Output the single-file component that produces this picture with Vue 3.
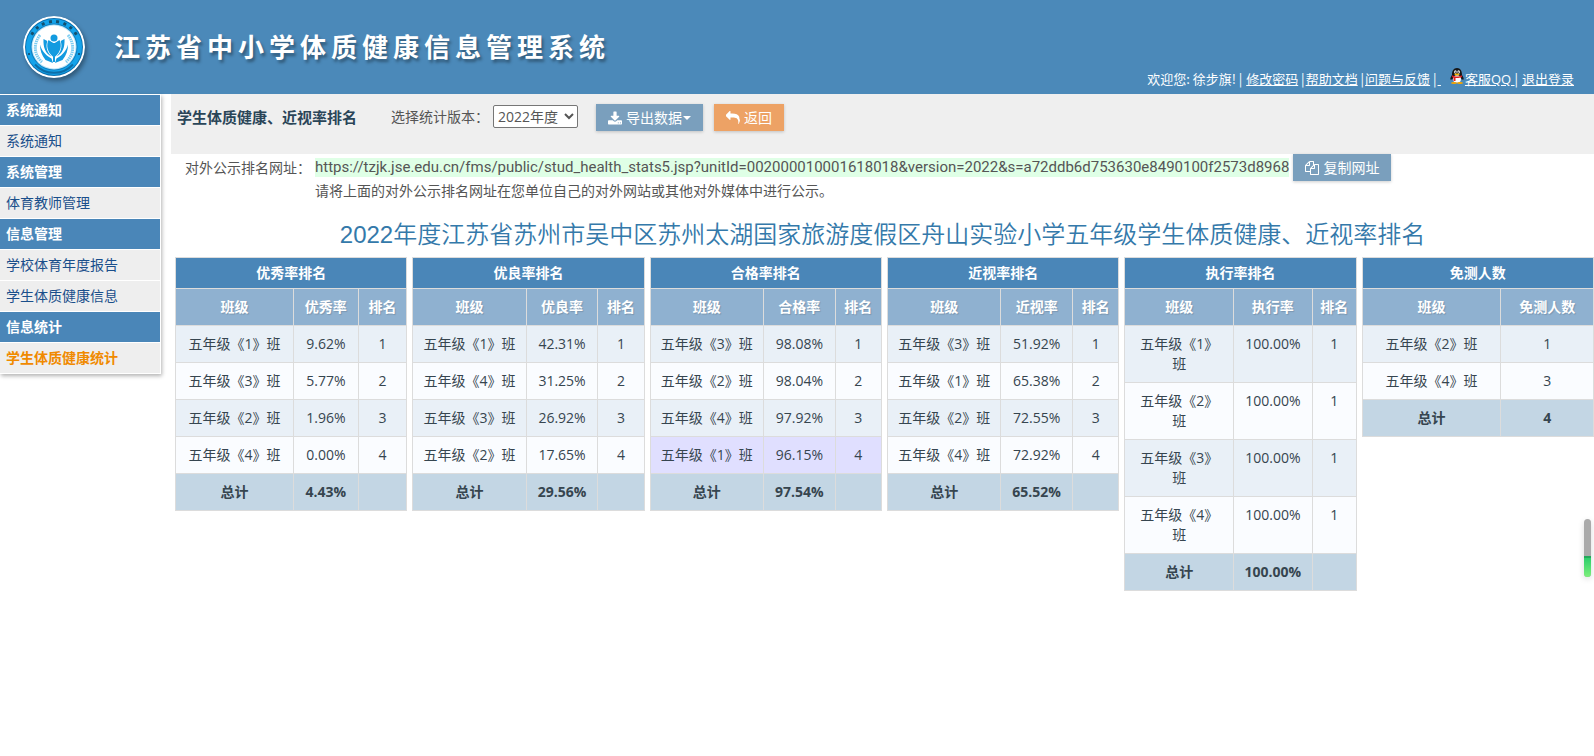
<script setup>
import { ref } from 'vue'

const version = ref('2022')
const publicUrl =
  'https://tzjk.jse.edu.cn/fms/public/stud_health_stats5.jsp?unitId=002000010001618018&version=2022&s=a72ddb6d753630e8490100f2573d8968'

const menu = [
  { title: '系统通知', items: [{ text: '系统通知' }] },
  { title: '系统管理', items: [{ text: '体育教师管理' }] },
  { title: '信息管理', items: [{ text: '学校体育年度报告' }, { text: '学生体质健康信息' }] },
  { title: '信息统计', items: [{ text: '学生体质健康统计', active: true }] },
]

const rankings = [
  {
    title: '优秀率排名',
    columns: ['班级', '优秀率', '排名'],
    widths: [51, 28, 21],
    rows: [
      ['五年级《1》班', '9.62%', '1'],
      ['五年级《3》班', '5.77%', '2'],
      ['五年级《2》班', '1.96%', '3'],
      ['五年级《4》班', '0.00%', '4'],
    ],
    total: ['总计', '4.43%', ''],
  },
  {
    title: '优良率排名',
    columns: ['班级', '优良率', '排名'],
    widths: [49, 31, 20],
    rows: [
      ['五年级《1》班', '42.31%', '1'],
      ['五年级《4》班', '31.25%', '2'],
      ['五年级《3》班', '26.92%', '3'],
      ['五年级《2》班', '17.65%', '4'],
    ],
    total: ['总计', '29.56%', ''],
  },
  {
    title: '合格率排名',
    columns: ['班级', '合格率', '排名'],
    widths: [49, 31, 20],
    highlighted: 3,
    rows: [
      ['五年级《3》班', '98.08%', '1'],
      ['五年级《2》班', '98.04%', '2'],
      ['五年级《4》班', '97.92%', '3'],
      ['五年级《1》班', '96.15%', '4'],
    ],
    total: ['总计', '97.54%', ''],
  },
  {
    title: '近视率排名',
    columns: ['班级', '近视率', '排名'],
    widths: [49, 31, 20],
    rows: [
      ['五年级《3》班', '51.92%', '1'],
      ['五年级《1》班', '65.38%', '2'],
      ['五年级《2》班', '72.55%', '3'],
      ['五年级《4》班', '72.92%', '4'],
    ],
    total: ['总计', '65.52%', ''],
  },
  {
    title: '执行率排名',
    columns: ['班级', '执行率', '排名'],
    widths: [47, 34, 19],
    compact: true,
    rows: [
      ['五年级《1》班', '100.00%', '1'],
      ['五年级《2》班', '100.00%', '1'],
      ['五年级《3》班', '100.00%', '1'],
      ['五年级《4》班', '100.00%', '1'],
    ],
    total: ['总计', '100.00%', ''],
  },
  {
    title: '免测人数',
    columns: ['班级', '免测人数'],
    widths: [60, 40],
    rows: [
      ['五年级《2》班', '1'],
      ['五年级《4》班', '3'],
    ],
    total: ['总计', '4'],
  },
]

// Angles of the marks along the upper half of the emblem ring
const ringMarks = [-58, -41, -25, -8, 8, 25, 41, 58]
</script>

<template>
  <div class="page">
    <header class="header">
      <div class="brand">
        <svg class="logo" viewBox="0 0 62 62" aria-hidden="true">
          <circle cx="31" cy="31" r="31" fill="#fff" />
          <circle cx="31" cy="31" r="29" fill="#0b6fae" />
          <circle cx="31" cy="31" r="28" fill="#14a3ea" />
          <circle cx="31" cy="31" r="23.500" fill="#0d7fc0" />
          <circle cx="31" cy="31" r="22.500" fill="#b9e4f8" />
          <circle cx="31" cy="31" r="21.500" fill="#fff" />
          <rect
            v-for="angle in ringMarks"
            :key="angle"
            x="29.5"
            y="4"
            width="3"
            height="3"
            fill="#14506f"
            :transform="`rotate(${angle} 31 31)`"
          />
          <circle cx="6" cy="38" r="1" fill="#124563" />
          <circle cx="56" cy="38" r="1" fill="#124563" />
          <path d="M12 48.500A25.800 25.800 0 0 0 50 48.500" fill="none" stroke="#0d6ea8" stroke-width="2" />
          <path d="M17 19C10 28 11 39 19 46" fill="none" stroke="#7ccdf2" stroke-width="3" stroke-dasharray="1.500 0.700" />
          <path d="M45 19C52 28 51 39 43 46" fill="none" stroke="#7ccdf2" stroke-width="3" stroke-dasharray="1.500 0.700" />
          <g fill="#129be0">
            <circle cx="31" cy="22" r="3.500" />
            <path d="M30.300 41C24 36 23 29 25.500 24L30.300 27z" />
            <path d="M31.700 41C38 36 39 29 36.500 24L31.700 27z" />
            <path d="M20.500 23L24.300 25C22.500 31 24 36 28.500 40.500C22.500 38 20 31 20.500 23z" />
            <path d="M41.500 23L37.700 25C39.500 31 38 36 33.500 40.500C39.500 38 42 31 41.500 23z" />
            <path d="M17 28.500C18.500 34 21.500 38.500 28.500 42.500L30 47C27.500 46 25 45 22.500 44C18.500 39 17 34 17 28.500z" />
            <path d="M45 28.500C43.500 34 40.500 38.500 33.500 42.500L32 47C34.500 46 37 45 39.500 44C43.500 39 45 34 45 28.500z" />
            <path d="M30 27H32V46H30z" />
          </g>
        </svg>
        <h1 class="system-name">江苏省中小学体质健康信息管理系统</h1>
      </div>
      <div class="user-links">
        <span>欢迎您: 徐步旗! | </span><a href="#">修改密码</a><span> |</span><a href="#">帮助文档</a><span> |</span><a href="#">问题与反馈</a><span> |</span><a href="#" class="service"><span>&nbsp;</span>
          <svg class="penguin" viewBox="0 0 16 16" aria-hidden="true">
            <path d="M3 7C3 3 4.500 0 8 0S13 3 13 7C15 10 15 11 14 12L12.500 10.500C12 15 4 15 3.500 10.500L2 12C1 11 1 10 3 7z" fill="#171717" />
            <ellipse cx="8" cy="11" rx="4" ry="3.800" fill="#fff" />
            <ellipse cx="6.400" cy="4" rx="1.300" ry="1.700" fill="#fff" />
            <ellipse cx="9.600" cy="4" rx="1.300" ry="1.700" fill="#fff" />
            <circle cx="6.700" cy="4.200" r="0.600" />
            <circle cx="9.300" cy="4.200" r="0.600" />
            <ellipse cx="8" cy="6.400" rx="2.600" ry="0.900" fill="#f7b500" />
            <path d="M3.200 7.300C6 9 10 9 12.800 7.300L13 9C10.500 10.200 8 10.200 6.500 10V13H4.600V9.700L3 9z" fill="#e02020" />
            <ellipse cx="5" cy="15" rx="3" ry="1" fill="#f7a500" />
            <ellipse cx="11" cy="15" rx="3" ry="1" fill="#f7a500" />
          </svg>客服QQ </a><span>| </span><a href="#">退出登录</a>
      </div>
    </header>

    <div class="body">
      <nav class="sidebar">
        <section v-for="group in menu" :key="group.title">
          <h2 class="menu-title">{{ group.title }}</h2>
          <a
            v-for="item in group.items"
            :key="item.text"
            href="#"
            class="menu-item"
            :class="{ active: item.active }"
          >{{ item.text }}</a>
        </section>
      </nav>

      <main class="content">
        <div class="toolbar">
          <h2 class="page-name">学生体质健康、近视率排名</h2>
          <label class="version-label" for="version">选择统计版本：</label>
          <select id="version" v-model="version" class="version">
            <option value="2022">2022年度</option>
          </select>
          <button type="button" class="button export">
            <svg class="icon" viewBox="0 0 1664 1536" aria-hidden="true">
              <path d="M1280 1344q0-26-19-45t-45-19-45 19-19 45 19 45 45 19 45-19 19-45zm256 0q0-26-19-45t-45-19-45 19-19 45 19 45 45 19 45-19 19-45zm128-224v320q0 40-28 68t-68 28h-1472q-40 0-68-28t-28-68v-320q0-40 28-68t68-28h465l135 136q58 56 136 56t136-56l136-136h464q40 0 68 28t28 68zm-325-569q17 41-14 70l-448 448q-18 19-45 19t-45-19l-448-448q-31-29-14-70 17-39 59-39h256v-448q0-26 19-45t45-19h256q26 0 45 19t19 45v448h256q42 0 59 39z" />
            </svg>
            <span>导出数据</span><i class="caret"></i>
          </button>
          <button type="button" class="button back">
            <svg class="icon" viewBox="0 0 1792 1792" aria-hidden="true">
              <path d="M1792 1120q0 166-127 451-3 7-10.500 24t-13.500 30-13 22q-12 17-28 17-15 0-23.500-10t-8.500-25q0-9 2.500-26.500t2.500-23.500q5-68 5-123 0-112-19.500-200.500t-54-153.500-89-112-117-79-146-50.500-167-27.500-188.500-8h-224v256q0 26-19 45t-45 19-45-19l-512-512q-19-19-19-45t19-45l512-512q19-19 45-19t45 19 19 45v256h224q713 0 875 403 53 134 53 333z" />
            </svg>
            <span>返回</span>
          </button>
        </div>

        <div class="publish">
          <span class="publish-label">对外公示排名网址：</span>
          <div>
            <div class="url-row">
              <span class="url">{{ publicUrl }}</span>
              <button type="button" class="button copy">
                <svg class="icon" viewBox="0 0 1792 1792" aria-hidden="true">
                  <path d="M1696 384q40 0 68 28t28 68v1216q0 40-28 68t-68 28h-960q-40 0-68-28t-28-68v-288h-544q-40 0-68-28t-28-68v-672q0-40 20-88t48-76l408-408q28-28 76-48t88-20h416q40 0 68 28t28 68v328q68-40 128-40h416zm-544 213l-299 299h299v-299zm-640-384l-299 299h299v-299zm196 647l316-316v-416h-384v416q0 40-28 68t-68 28h-416v640h512v-256q0-40 20-88t48-76zm956 804v-1152h-384v416q0 40-28 68t-68 28h-416v640h896z" />
                </svg>
                <span>复制网址</span>
              </button>
            </div>
            <p class="hint">请将上面的对外公示排名网址在您单位自己的对外网站或其他对外媒体中进行公示。</p>
          </div>
        </div>

        <h2 class="report-title">2022年度江苏省苏州市吴中区苏州太湖国家旅游度假区舟山实验小学五年级学生体质健康、近视率排名</h2>

        <div class="rankings">
          <table
            v-for="ranking in rankings"
            :key="ranking.title"
            class="ranking"
            :class="{ compact: ranking.compact }"
          >
            <colgroup>
              <col v-for="(width, i) in ranking.widths" :key="i" :style="{ width: width + '%' }" />
            </colgroup>
            <thead>
              <tr class="caption-row">
                <th :colspan="ranking.columns.length">{{ ranking.title }}</th>
              </tr>
              <tr class="column-row">
                <th v-for="column in ranking.columns" :key="column">{{ column }}</th>
              </tr>
            </thead>
            <tbody>
              <tr
                v-for="(row, r) in ranking.rows"
                :key="r"
                :class="{ highlighted: ranking.highlighted === r }"
              >
                <td v-for="(cell, c) in row" :key="c">{{ cell }}</td>
              </tr>
            </tbody>
            <tfoot>
              <tr>
                <td v-for="(cell, c) in ranking.total" :key="c">{{ cell }}</td>
              </tr>
            </tfoot>
          </table>
        </div>
      </main>
    </div>

    <div class="gauge" aria-hidden="true"><div class="gauge-level"></div></div>
  </div>
</template>

<style>
body {
  background: #fff;
}
</style>

<style scoped>
.page {
  font-family: "Open Sans", "Noto Sans CJK SC", sans-serif;
  font-size: 14px;
  line-height: 20px;
  color: #555;
}
h1,
h2,
p {
  margin: 0;
}

/* Header */
.header {
  display: flex;
  justify-content: space-between;
  box-sizing: border-box;
  height: 94px;
  padding: 0 20px 0 23px;
  background: #4b89b9;
  color: #fff;
}
.brand {
  display: flex;
  align-items: center;
  gap: 29px;
}
.logo {
  width: 62px;
  height: 62px;
  border-radius: 50%;
  box-shadow: 2px 3px 4px rgba(0, 0, 0, 0.35);
}
.system-name {
  font-size: 26px;
  font-weight: 700;
  line-height: 36px;
  letter-spacing: 5px;
  white-space: nowrap;
  text-shadow: 2px 3px 3px rgba(0, 0, 0, 0.35);
}
.user-links {
  align-self: flex-end;
  padding-bottom: 5px;
  font-family: "Noto Sans CJK SC", sans-serif;
  font-size: 13px;
  white-space: nowrap;
}
.user-links > span {
  white-space: pre;
}
.user-links a {
  margin-left: 1px;
  color: #fff;
  text-decoration: underline;
}
.user-links .service {
  font-family: "Open Sans", "Noto Sans CJK SC", sans-serif;
}
.penguin {
  width: 16px;
  height: 16px;
  margin-left: 8px;
}

/* Side menu */
.body {
  display: flex;
  align-items: flex-start;
  gap: 10px;
}
.sidebar {
  flex: none;
  width: 160px;
  border-top: 1px solid #fff;
  border-right: 1px solid #fff;
  box-shadow: 1px 2px 4px rgba(0, 0, 0, 0.3);
}
.menu-title,
.menu-item {
  display: block;
  padding: 5px 6px;
  border-bottom: 1px solid #fff;
  font-size: 14px;
  line-height: 20px;
}
.menu-title {
  background: #4a86b8;
  color: #fff;
  font-weight: 700;
}
.menu-item {
  background: #eee;
  color: #1a4f8b;
  text-decoration: none;
}
.menu-item.active {
  color: #f08a00;
  font-weight: 700;
}

/* Toolbar */
.content {
  flex: 1;
  min-width: 0;
}
.toolbar {
  display: flex;
  align-items: flex-start;
  box-sizing: border-box;
  height: 60px;
  padding: 10px 6px;
  background: #efefef;
}
.page-name {
  margin-right: 34px;
  font-size: 15px;
  font-weight: 700;
  line-height: 26px;
  color: #2a4558;
}
.version-label {
  line-height: 26px;
}
.version {
  width: 85px;
  height: 23px;
  margin: 1px 18px 0 4px;
  padding: 0;
  border: 1px solid #767676;
  border-radius: 2px;
  background: #fff;
  color: #555;
  font-family: inherit;
  font-size: 14px;
}
.button {
  display: flex;
  flex: none;
  align-items: center;
  height: 27px;
  padding: 0 12px;
  border: 0;
  background: #7a9fbd;
  box-shadow: 0 1px 3px rgba(0, 0, 0, 0.2);
  color: #fff;
  font-family: inherit;
  font-size: 14px;
  line-height: 20px;
}
.icon {
  width: 14px;
  height: 14px;
  margin-right: 4px;
  fill: currentColor;
}
.export {
  margin-right: 11px;
}
.caret {
  margin-left: 1px;
  border-top: 4px solid #fff;
  border-right: 4px solid transparent;
  border-left: 4px solid transparent;
}
.back {
  background: #eda265;
}

/* Public address */
.publish {
  display: flex;
  padding-left: 14px;
}
.publish-label {
  flex: none;
  width: 130px;
  line-height: 28px;
}
.url-row {
  display: flex;
  align-items: center;
  gap: 4px;
}
.url {
  background: #dfffe6;
  font-family: Roboto, sans-serif;
  font-size: 15px;
  line-height: 19px;
  white-space: nowrap;
}
.hint {
  line-height: 20px;
}

/* Rankings */
.report-title {
  margin: 18px 0 6px;
  font-family: "Liberation Sans", "Noto Sans CJK SC", sans-serif;
  font-size: 24px;
  font-weight: 350;
  line-height: 32px;
  text-align: center;
  color: #3479aa;
}
.rankings {
  display: grid;
  grid-template-columns: repeat(6, minmax(0, 1fr));
  align-items: start;
  gap: 5px;
  padding-left: 4px;
}
.ranking {
  width: 100%;
  table-layout: fixed;
  border-collapse: collapse;
  color: #36454f;
  text-align: center;
}
.ranking th,
.ranking td {
  padding: 8px;
  border: 1px solid #dcdcdc;
  vertical-align: top;
}
.ranking th {
  padding: 8px 4px;
  color: #fff;
  font-weight: 700;
}
.ranking .caption-row th {
  padding: 5px;
  background: #4a86b8;
}
.column-row th {
  background: #8fb1d0;
  text-shadow: 1px 1px 1px rgba(0, 0, 0, 0.15);
}
.ranking tbody tr:nth-child(odd) {
  background: #e9f0f7;
}
.ranking tbody tr:nth-child(even) {
  background: #fafcff;
}
.ranking tbody tr.highlighted {
  background: #e0dfff;
}
.ranking tfoot tr {
  background: #c3d6e4;
  font-weight: 700;
}
.compact tbody td:first-child {
  padding-right: 12px;
  padding-left: 12px;
}

/* Level gauge at the window's edge */
.gauge {
  position: fixed;
  top: 519px;
  right: 3px;
  display: flex;
  flex-direction: column;
  justify-content: flex-end;
  width: 7px;
  height: 58px;
  overflow: hidden;
  border-radius: 4px;
  background: #aaa;
  box-shadow: 0 2px 6px rgba(0, 0, 0, 0.15);
}
.gauge-level {
  height: 21px;
  border-top: 2px solid #23a85a;
  box-sizing: border-box;
  background: linear-gradient(#2fce6c, #7df07a);
}
</style>
